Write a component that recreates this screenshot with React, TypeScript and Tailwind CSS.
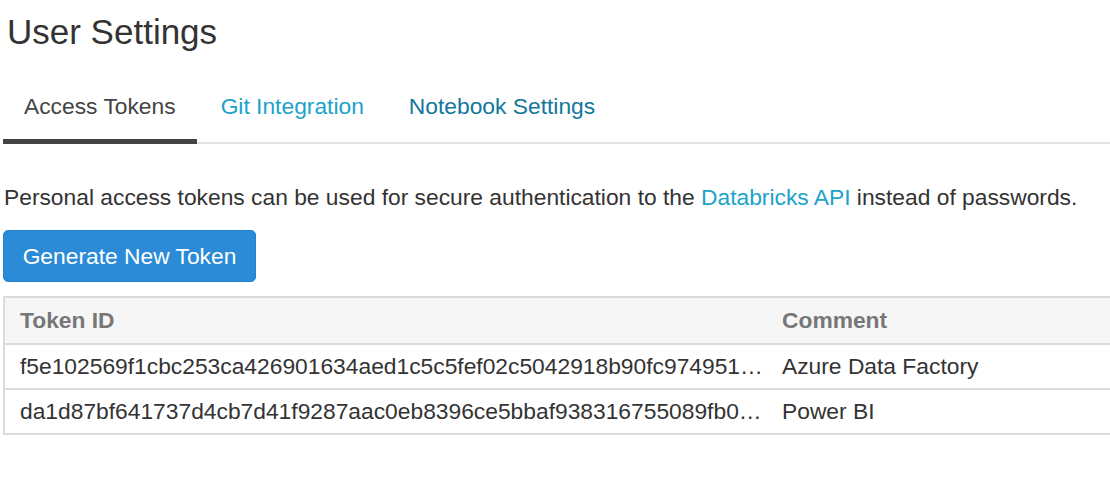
const tokens = [
  {
    id: "f5e102569f1cbc253ca426901634aed1c5c5fef02c5042918b90fc9749518a3c",
    comment: "Azure Data Factory",
  },
  {
    id: "da1d87bf641737d4cb7d41f9287aac0eb8396ce5bbaf938316755089fb0c2e71",
    comment: "Power BI",
  },
];

export default function App() {
  return (
    <div
      className="w-[1110px] h-[478px] overflow-hidden bg-white text-[#333] pl-[3px]"
      style={{ fontFamily: '"Liberation Sans", Arial, sans-serif' }}
    >
      <h1 className="text-[35px] leading-none pt-[14px] pl-[4px]">User Settings</h1>

      <div className="mt-[42px] flex border-b-2 border-[#e2e2e2] w-[1110px]">
        <div className="px-[21px] pb-[20px] pt-[2px] text-[22.8px] leading-[26px] border-b-[5px] border-[#444] -mb-[2px] text-[#444]">
          Access Tokens
        </div>
        <div className="px-[24px] pb-[20px] pt-[2px] text-[22.8px] leading-[26px] text-[#1ba3c9]">
          Git Integration
        </div>
        <div className="px-[21px] pb-[20px] pt-[2px] text-[22.8px] leading-[26px] text-[#12789a]">
          Notebook Settings
        </div>
      </div>

      <p className="mt-[40px] text-[22.8px] leading-[26px] pl-[1px]">
        Personal access tokens can be used for secure authentication to the{" "}
        <a className="text-[#1ba3c9]">Databricks API</a> instead of passwords.
      </p>

      <button className="mt-[20px] h-[52px] w-[253px] rounded-[5px] bg-[#2b8bd6] border border-[#2480c8] text-white text-[22.8px]">
        Generate New Token
      </button>

      <table className="mt-[14px] w-[1112px] table-fixed border-collapse border-2 border-[#dcdcdc] text-[22.8px]">
        <colgroup>
          <col className="w-[763px]" />
          <col />
        </colgroup>
        <thead>
          <tr className="bg-[#f6f6f6] h-[47px]">
            <th className="text-left font-bold text-[#777] px-[15px] border-b-2 border-[#dcdcdc]">Token ID</th>
            <th className="text-left font-bold text-[#777] px-[15px] border-b-2 border-[#dcdcdc]">Comment</th>
          </tr>
        </thead>
        <tbody>
          {tokens.map((t) => (
            <tr key={t.id} className="h-[45px] border-b-2 border-[#dcdcdc]">
              <td className="pl-[15px] pr-[2px] truncate">{t.id}</td>
              <td className="px-[15px] truncate">{t.comment}</td>
            </tr>
          ))}
        </tbody>
      </table>
    </div>
  );
}
